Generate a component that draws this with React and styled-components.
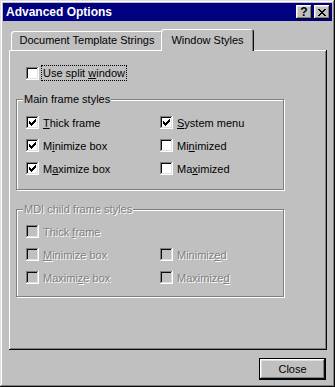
import { useState } from 'react';
import styled, { createGlobalStyle } from 'styled-components';

const GlobalStyle = createGlobalStyle`
  html, body {
    margin: 0;
    padding: 0;
    background: #c0c0c0;
  }
  body {
    font-family: 'Liberation Sans', Arial, sans-serif;
    font-size: 11px;
    color: #000;
  }
`;

const parseLabel = (text) => {
  const index = text.indexOf('&');
  if (index < 0) return text;
  return (
    <>
      {text.slice(0, index)}
      <u>{text[index + 1]}</u>
      {text.slice(index + 2)}
    </>
  );
};

const CheckMark = () => (
  <svg width="13" height="13" viewBox="0 0 13 13" shapeRendering="crispEdges">
    <path
      d="M3 5h1v3h-1z M4 6h1v3h-1z M5 7h1v3h-1z M6 6h1v3h-1z M7 5h1v3h-1z M8 4h1v3h-1z M9 3h1v3h-1z"
      fill="#000"
    />
  </svg>
);

const CheckItem = ({ label, checked, disabled, focused, onToggle }) => (
  <Item onClick={disabled ? undefined : onToggle}>
    <Box $disabled={disabled}>{checked && <CheckMark />}</Box>
    <Label $disabled={disabled} $focused={focused}>
      {parseLabel(label)}
    </Label>
  </Item>
);

const mainStyles = [
  { id: 'thick', label: '&Thick frame' },
  { id: 'sysmenu', label: '&System menu' },
  { id: 'minbox', label: 'M&inimize box' },
  { id: 'minimized', label: 'Mi&nimized' },
  { id: 'maxbox', label: 'M&aximize box' },
  { id: 'maximized', label: 'Ma&ximized' },
];

const childStyles = [
  { id: 'cthick', label: 'Thick &frame' },
  { id: 'cempty', label: null },
  { id: 'cminbox', label: '&Minimize box' },
  { id: 'cminimized', label: 'Minimiz&ed' },
  { id: 'cmaxbox', label: 'Maximi&ze box' },
  { id: 'cmaximized', label: 'Maximize&d' },
];

const App = () => {
  const [checks, setChecks] = useState({
    split: false,
    thick: true,
    sysmenu: true,
    minbox: true,
    minimized: false,
    maxbox: true,
    maximized: false,
  });

  const toggle = (id) => setChecks((prev) => ({ ...prev, [id]: !prev[id] }));

  return (
    <>
      <GlobalStyle />
      <Window>
        <TitleBar>
          <Title>Advanced Options</Title>
          <TitleButtons>
            <TitleButton type="button" aria-label="Help">
              ?
            </TitleButton>
            <TitleButton type="button" aria-label="Close">
              <svg width="8" height="7" viewBox="0 0 8 7" shapeRendering="crispEdges">
                <path
                  d="M0 0h2v1h-2z M1 1h2v1h-2z M2 2h4v1h-4z M3 3h2v1h-2z M2 4h4v1h-4z M1 5h2v1h-2z M0 6h2v1h-2z M6 0h2v1h-2z M5 1h2v1h-2z M5 5h2v1h-2z M6 6h2v1h-2z"
                  fill="#000"
                />
              </svg>
            </TitleButton>
          </TitleButtons>
        </TitleBar>

        <Body>
          <TabStrip>
            <Tab $width={152}>Document Template Strings</Tab>
            <Tab $width={93} $active>
              Window Styles
            </Tab>
          </TabStrip>

          <Panel>
            <SplitRow>
              <CheckItem
                label="Use split &window"
                checked={checks.split}
                focused
                onToggle={() => toggle('split')}
              />
            </SplitRow>

            <Group $top={15} $padTop={11} $padBottom={9}>
              <Legend>Main frame styles</Legend>
              <Grid>
                {mainStyles.map((item) => (
                  <CheckItem
                    key={item.id}
                    label={item.label}
                    checked={checks[item.id]}
                    onToggle={() => toggle(item.id)}
                  />
                ))}
              </Grid>
            </Group>

            <Group $top={19} $padTop={10} $padBottom={7}>
              <Legend $disabled>MDI child frame styles</Legend>
              <Grid>
                {childStyles.map((item) =>
                  item.label ? (
                    <CheckItem key={item.id} label={item.label} disabled />
                  ) : (
                    <span key={item.id} />
                  )
                )}
              </Grid>
            </Group>
          </Panel>

          <Footer>
            <DefaultButton type="button">Close</DefaultButton>
          </Footer>
        </Body>
      </Window>
    </>
  );
};

const Window = styled.div`
  width: 335px;
  height: 387px;
  box-sizing: border-box;
  padding: 3px;
  background: #c0c0c0;
  box-shadow: inset -1px -1px #0a0a0a, inset 1px 1px #dfdfdf,
    inset -2px -2px #808080, inset 2px 2px #fff;
  display: flex;
  flex-direction: column;
`;

const TitleBar = styled.div`
  height: 18px;
  background: #000080;
  display: flex;
  align-items: center;
  justify-content: space-between;
  padding: 0 2px 0 3px;
`;

const Title = styled.span`
  color: #fff;
  font-weight: bold;
  font-size: 12px;
`;

const TitleButtons = styled.div`
  display: flex;
  gap: 2px;
`;

const TitleButton = styled.button`
  width: 16px;
  height: 14px;
  padding: 0;
  border: none;
  background: #c0c0c0;
  box-shadow: inset -1px -1px #0a0a0a, inset 1px 1px #fff,
    inset -2px -2px #808080, inset 2px 2px #dfdfdf;
  display: flex;
  align-items: center;
  justify-content: center;
  font-family: 'Liberation Sans', Arial, sans-serif;
  font-weight: bold;
  font-size: 12px;
  line-height: 14px;
  color: #000;
`;

const Body = styled.div`
  flex: 1;
  display: flex;
  flex-direction: column;
  padding: 8px 5px 0 6px;
`;

const TabStrip = styled.div`
  height: 21px;
  display: flex;
  align-items: flex-end;
  padding-left: 2px;
`;

const Tab = styled.div`
  width: ${(p) => p.$width}px;
  height: ${(p) => (p.$active ? 22 : 19)}px;
  box-sizing: border-box;
  margin: ${(p) => (p.$active ? '0 0 -1px -2px' : '0')};
  padding-top: ${(p) => (p.$active ? 2 : 0)}px;
  line-height: 19px;
  text-align: center;
  white-space: nowrap;
  background: #c0c0c0;
  border-top-left-radius: 3px;
  border-top-right-radius: 3px;
  box-shadow: inset 1px 1px #fff, inset -1px 0 #0a0a0a, inset -2px 0 #808080;
  position: ${(p) => (p.$active ? 'relative' : 'static')};
  z-index: ${(p) => (p.$active ? 1 : 'auto')};
  cursor: default;
`;

const Panel = styled.div`
  height: 300px;
  box-sizing: border-box;
  padding: 12px 7px 0 7px;
  background: #c0c0c0;
  box-shadow: inset -1px -1px #0a0a0a, inset 1px 1px #fff,
    inset -2px -2px #808080;
  display: flex;
  flex-direction: column;
`;

const SplitRow = styled.div`
  height: 22px;
  display: flex;
  align-items: center;
  padding-left: 10px;
`;

const Group = styled.div`
  position: relative;
  width: 268px;
  box-sizing: border-box;
  margin-top: ${(p) => p.$top}px;
  padding: ${(p) => p.$padTop}px 0 ${(p) => p.$padBottom}px 9px;
  border: 1px solid #808080;
  box-shadow: inset 1px 1px #fff, 1px 1px #fff;
`;

const Legend = styled.span`
  position: absolute;
  top: -8px;
  left: 6px;
  padding: 0 1px;
  line-height: 14px;
  background: #c0c0c0;
  color: ${(p) => (p.$disabled ? '#808080' : '#000')};
  text-shadow: ${(p) => (p.$disabled ? '1px 1px #fff' : 'none')};
`;

const Grid = styled.div`
  display: grid;
  grid-template-columns: 134px 1fr;
  grid-auto-rows: 23px;
`;

const Item = styled.div`
  display: flex;
  align-items: center;
  cursor: default;
`;

const Box = styled.span`
  width: 13px;
  height: 13px;
  flex: none;
  display: block;
  background: ${(p) => (p.$disabled ? '#c0c0c0' : '#fff')};
  box-shadow: inset -1px -1px #fff, inset 1px 1px #808080,
    inset -2px -2px #dfdfdf, inset 2px 2px #0a0a0a;
  svg {
    display: block;
  }
`;

const Label = styled.span`
  margin-left: 3px;
  padding: 0 1px;
  line-height: 14px;
  white-space: nowrap;
  outline: ${(p) => (p.$focused ? '1px dotted #000' : 'none')};
  color: ${(p) => (p.$disabled ? '#808080' : '#000')};
  text-shadow: ${(p) => (p.$disabled ? '1px 1px #fff' : 'none')};
`;

const Footer = styled.div`
  display: flex;
  justify-content: flex-end;
  margin-top: 8px;
  padding-right: 1px;
`;

const DefaultButton = styled.button`
  width: 67px;
  height: 22px;
  padding: 0;
  background: #c0c0c0;
  border: 1px solid #000;
  box-shadow: inset -1px -1px #0a0a0a, inset 1px 1px #fff,
    inset -2px -2px #808080, inset 2px 2px #dfdfdf;
  font-family: 'Liberation Sans', Arial, sans-serif;
  font-size: 11px;
  color: #000;
`;

export default App;
